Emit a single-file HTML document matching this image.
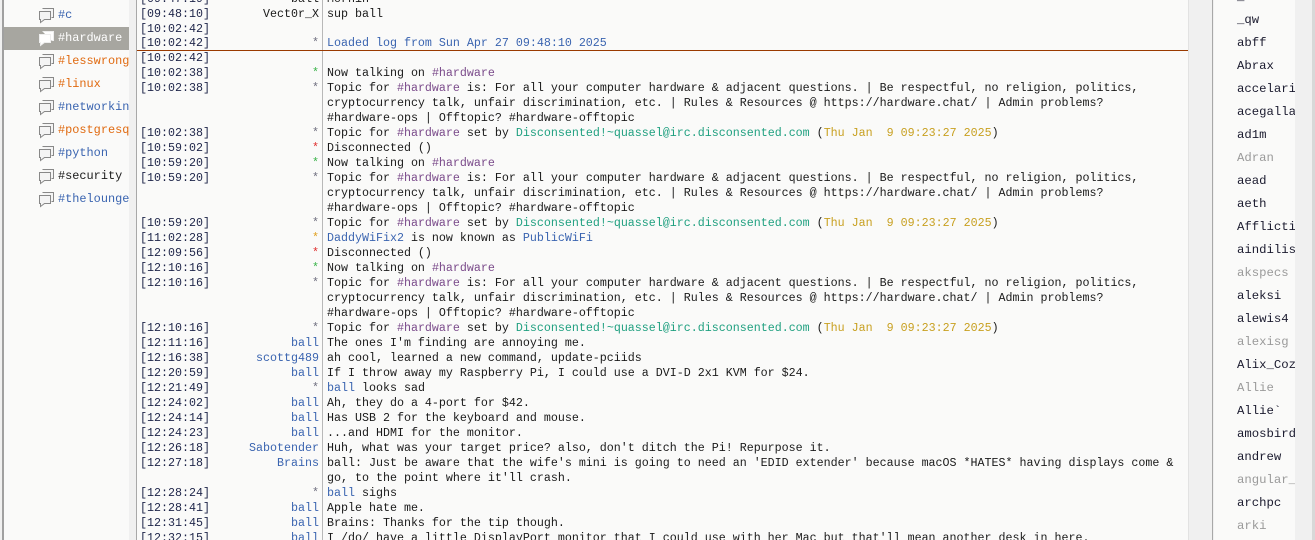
<!DOCTYPE html>
<html><head><meta charset="utf-8">
<style>
*{margin:0;padding:0;box-sizing:border-box}
body{width:1315px;height:540px;overflow:hidden;background:#f0f0f0;font-family:"Liberation Mono","DejaVu Sans Mono",monospace;font-size:11.67px;color:#1a1a1a;position:relative}
#side{position:absolute;left:2px;top:0;width:134px;height:540px;border-left:2px solid #a0a0a0;background:#f0f0f0}
#sidein{position:absolute;left:0;top:0;width:125px;height:540px;background:#fafaf9}
#sideb{position:absolute;left:132px;top:0;width:1px;height:540px;background:#a8a8a8}
.ch{position:absolute;left:0;width:125px;height:23px;line-height:23px;padding-left:54px;white-space:nowrap;overflow:hidden;font-size:11.9px}
.ch.sel{background:#a7a6a0;color:#fff}
.ic{position:absolute;left:34px;top:4px}
#chat{position:absolute;left:137px;top:0;width:1051px;height:540px;background:#fafaf9;overflow:hidden}
#gut{position:absolute;left:1188px;top:0;width:25px;height:540px;background:#f0f0f0;border-left:1px solid #e2e2e2;border-right:1px solid #a8a8a8}
#nl{position:absolute;left:1214px;top:0;width:81px;height:540px;background:#fafaf9;overflow:hidden}
#sb{position:absolute;left:1295px;top:0;width:20px;height:540px;background:#f0f0f0;border-right:3px solid #d8d8d8}
.n{position:absolute;left:23px;height:23px;line-height:23px;white-space:nowrap;font-size:12.3px;color:#1a1a2e}
.n.a{color:#9a9a9a}
.r{position:absolute;left:0;height:15px;line-height:15px;white-space:pre;width:1051px}
.t{position:absolute;left:3px;color:#1d2448}
.k{position:absolute;left:80px;width:102px;text-align:right;color:#3a64b0}
.m{position:absolute;left:190px}
#vl{position:absolute;left:185px;top:0;width:1px;height:540px;background:#b8b8b8}
.s{color:#707080}.g{color:#3cb44b}.red{color:#e03030}.y{color:#e0a020}
.h{color:#7a4a8a}.tl{color:#20a080}.d{color:#c8a020}.b{color:#3a64b0}
#rows{position:absolute;left:0;top:1px;width:1051px;height:540px}
</style></head><body>
<div id="side"><div id="sidein"></div><div id="sideb"></div>
<div class="ch" style="top:4px;color:#3a64b0"><svg class="ic" width="17" height="16"><path d="M4.5 0.5h11v9h-2M1.5 3.5h11v8h-6l-4 3v-3h-1z" fill="#f4f4f4" stroke="#888" stroke-width="1"/></svg>#c</div>
<div class="ch sel" style="top:27px"><svg class="ic" width="17" height="16"><path d="M4.5 0.5h11v9h-2M1.5 3.5h11v8h-6l-4 3v-3h-1z" fill="#fff" stroke="#eee" stroke-width="1"/></svg>#hardware</div>
<div class="ch" style="top:50px;color:#e06a10"><svg class="ic" width="17" height="16"><path d="M4.5 0.5h11v9h-2M1.5 3.5h11v8h-6l-4 3v-3h-1z" fill="#f4f4f4" stroke="#888" stroke-width="1"/></svg>#lesswrong</div>
<div class="ch" style="top:73px;color:#e06a10"><svg class="ic" width="17" height="16"><path d="M4.5 0.5h11v9h-2M1.5 3.5h11v8h-6l-4 3v-3h-1z" fill="#f4f4f4" stroke="#888" stroke-width="1"/></svg>#linux</div>
<div class="ch" style="top:96px;color:#3a64b0"><svg class="ic" width="17" height="16"><path d="M4.5 0.5h11v9h-2M1.5 3.5h11v8h-6l-4 3v-3h-1z" fill="#f4f4f4" stroke="#888" stroke-width="1"/></svg>#networking</div>
<div class="ch" style="top:119px;color:#e06a10"><svg class="ic" width="17" height="16"><path d="M4.5 0.5h11v9h-2M1.5 3.5h11v8h-6l-4 3v-3h-1z" fill="#f4f4f4" stroke="#888" stroke-width="1"/></svg>#postgresql</div>
<div class="ch" style="top:142px;color:#3a64b0"><svg class="ic" width="17" height="16"><path d="M4.5 0.5h11v9h-2M1.5 3.5h11v8h-6l-4 3v-3h-1z" fill="#f4f4f4" stroke="#888" stroke-width="1"/></svg>#python</div>
<div class="ch" style="top:165px;color:#1a1a1a"><svg class="ic" width="17" height="16"><path d="M4.5 0.5h11v9h-2M1.5 3.5h11v8h-6l-4 3v-3h-1z" fill="#f4f4f4" stroke="#888" stroke-width="1"/></svg>#security</div>
<div class="ch" style="top:188px;color:#3a64b0"><svg class="ic" width="17" height="16"><path d="M4.5 0.5h11v9h-2M1.5 3.5h11v8h-6l-4 3v-3h-1z" fill="#f4f4f4" stroke="#888" stroke-width="1"/></svg>#thelounge</div>
</div>
<div id="chat"><div id="vl"></div>
<div style="position:absolute;left:0;top:50px;width:1051px;height:1px;background:#9a3a00"></div>
<div id="rows">
<div class="r" style="top:-9px"><span class="t">[09:47:19]</span><span class="k" style="color:#1a1a1a">ball</span><span class="m">Mornin</span></div>
<div class="r" style="top:6px"><span class="t">[09:48:10]</span><span class="k" style="color:#1a1a1a">Vect0r_X</span><span class="m">sup ball</span></div>
<div class="r" style="top:21px"><span class="t">[10:02:42]</span></div>
<div class="r" style="top:35px"><span class="t">[10:02:42]</span><span class="k s">*</span><span class="m b">Loaded log from Sun Apr 27 09:48:10 2025</span></div>
<div class="r" style="top:50px"><span class="t">[10:02:42]</span></div>
<div class="r" style="top:65px"><span class="t">[10:02:38]</span><span class="k g">*</span><span class="m">Now talking on <span class="h">#hardware</span></span></div>
<div class="r" style="top:80px"><span class="t">[10:02:38]</span><span class="k s">*</span><span class="m">Topic for <span class="h">#hardware</span> is: For all your computer hardware &amp; adjacent questions. | Be respectful, no religion, politics,</span></div>
<div class="r" style="top:95px"><span class="m">cryptocurrency talk, unfair discrimination, etc. | Rules &amp; Resources @ https://hardware.chat/ | Admin problems?</span></div>
<div class="r" style="top:110px"><span class="m">#hardware-ops | Offtopic? #hardware-offtopic</span></div>
<div class="r" style="top:125px"><span class="t">[10:02:38]</span><span class="k s">*</span><span class="m">Topic for <span class="h">#hardware</span> set by <span class="tl">Disconsented!~quassel@irc.disconsented.com</span> (<span class="d">Thu Jan  9 09:23:27 2025</span>)</span></div>
<div class="r" style="top:140px"><span class="t">[10:59:02]</span><span class="k red">*</span><span class="m">Disconnected ()</span></div>
<div class="r" style="top:155px"><span class="t">[10:59:20]</span><span class="k g">*</span><span class="m">Now talking on <span class="h">#hardware</span></span></div>
<div class="r" style="top:170px"><span class="t">[10:59:20]</span><span class="k s">*</span><span class="m">Topic for <span class="h">#hardware</span> is: For all your computer hardware &amp; adjacent questions. | Be respectful, no religion, politics,</span></div>
<div class="r" style="top:185px"><span class="m">cryptocurrency talk, unfair discrimination, etc. | Rules &amp; Resources @ https://hardware.chat/ | Admin problems?</span></div>
<div class="r" style="top:200px"><span class="m">#hardware-ops | Offtopic? #hardware-offtopic</span></div>
<div class="r" style="top:215px"><span class="t">[10:59:20]</span><span class="k s">*</span><span class="m">Topic for <span class="h">#hardware</span> set by <span class="tl">Disconsented!~quassel@irc.disconsented.com</span> (<span class="d">Thu Jan  9 09:23:27 2025</span>)</span></div>
<div class="r" style="top:230px"><span class="t">[11:02:28]</span><span class="k y">*</span><span class="m"><span class="b">DaddyWiFix2</span> is now known as <span class="b">PublicWiFi</span></span></div>
<div class="r" style="top:245px"><span class="t">[12:09:56]</span><span class="k red">*</span><span class="m">Disconnected ()</span></div>
<div class="r" style="top:260px"><span class="t">[12:10:16]</span><span class="k g">*</span><span class="m">Now talking on <span class="h">#hardware</span></span></div>
<div class="r" style="top:275px"><span class="t">[12:10:16]</span><span class="k s">*</span><span class="m">Topic for <span class="h">#hardware</span> is: For all your computer hardware &amp; adjacent questions. | Be respectful, no religion, politics,</span></div>
<div class="r" style="top:290px"><span class="m">cryptocurrency talk, unfair discrimination, etc. | Rules &amp; Resources @ https://hardware.chat/ | Admin problems?</span></div>
<div class="r" style="top:305px"><span class="m">#hardware-ops | Offtopic? #hardware-offtopic</span></div>
<div class="r" style="top:320px"><span class="t">[12:10:16]</span><span class="k s">*</span><span class="m">Topic for <span class="h">#hardware</span> set by <span class="tl">Disconsented!~quassel@irc.disconsented.com</span> (<span class="d">Thu Jan  9 09:23:27 2025</span>)</span></div>
<div class="r" style="top:335px"><span class="t">[12:11:16]</span><span class="k">ball</span><span class="m">The ones I'm finding are annoying me.</span></div>
<div class="r" style="top:350px"><span class="t">[12:16:38]</span><span class="k">scottg489</span><span class="m">ah cool, learned a new command, update-pciids</span></div>
<div class="r" style="top:365px"><span class="t">[12:20:59]</span><span class="k">ball</span><span class="m">If I throw away my Raspberry Pi, I could use a DVI-D 2x1 KVM for $24.</span></div>
<div class="r" style="top:380px"><span class="t">[12:21:49]</span><span class="k s">*</span><span class="m"><span class="b">ball</span> looks sad</span></div>
<div class="r" style="top:395px"><span class="t">[12:24:02]</span><span class="k">ball</span><span class="m">Ah, they do a 4-port for $42.</span></div>
<div class="r" style="top:410px"><span class="t">[12:24:14]</span><span class="k">ball</span><span class="m">Has USB 2 for the keyboard and mouse.</span></div>
<div class="r" style="top:425px"><span class="t">[12:24:23]</span><span class="k">ball</span><span class="m">...and HDMI for the monitor.</span></div>
<div class="r" style="top:440px"><span class="t">[12:26:18]</span><span class="k">Sabotender</span><span class="m">Huh, what was your target price? also, don't ditch the Pi! Repurpose it.</span></div>
<div class="r" style="top:455px"><span class="t">[12:27:18]</span><span class="k">Brains</span><span class="m">ball: Just be aware that the wife's mini is going to need an 'EDID extender' because macOS *HATES* having displays come &amp;</span></div>
<div class="r" style="top:470px"><span class="m">go, to the point where it'll crash.</span></div>
<div class="r" style="top:485px"><span class="t">[12:28:24]</span><span class="k s">*</span><span class="m"><span class="b">ball</span> sighs</span></div>
<div class="r" style="top:500px"><span class="t">[12:28:41]</span><span class="k">ball</span><span class="m">Apple hate me.</span></div>
<div class="r" style="top:515px"><span class="t">[12:31:45]</span><span class="k">ball</span><span class="m">Brains: Thanks for the tip though.</span></div>
<div class="r" style="top:530px"><span class="t">[12:32:15]</span><span class="k">ball</span><span class="m">I /do/ have a little DisplayPort monitor that I could use with her Mac but that'll mean another desk in here.</span></div>
</div>
</div>
<div id="gut"></div>
<div id="nl">
<div class="n" style="top:-14px">_</div>
<div class="n" style="top:9px">_qw</div>
<div class="n" style="top:32px">abff</div>
<div class="n" style="top:55px">Abrax</div>
<div class="n" style="top:78px">accelari</div>
<div class="n" style="top:101px">acegalla</div>
<div class="n" style="top:124px">ad1m</div>
<div class="n a" style="top:147px">Adran</div>
<div class="n" style="top:170px">aead</div>
<div class="n" style="top:193px">aeth</div>
<div class="n" style="top:216px">Afflicti</div>
<div class="n" style="top:239px">aindilis</div>
<div class="n a" style="top:262px">akspecs</div>
<div class="n" style="top:285px">aleksi</div>
<div class="n" style="top:308px">alewis4</div>
<div class="n a" style="top:331px">alexisg</div>
<div class="n" style="top:354px">Alix_Coz</div>
<div class="n a" style="top:377px">Allie</div>
<div class="n" style="top:400px">Allie`</div>
<div class="n" style="top:423px">amosbird</div>
<div class="n" style="top:446px">andrew</div>
<div class="n a" style="top:469px">angular_</div>
<div class="n" style="top:492px">archpc</div>
<div class="n a" style="top:515px">arki</div>
</div>
<div id="sb"></div>
</body></html>
